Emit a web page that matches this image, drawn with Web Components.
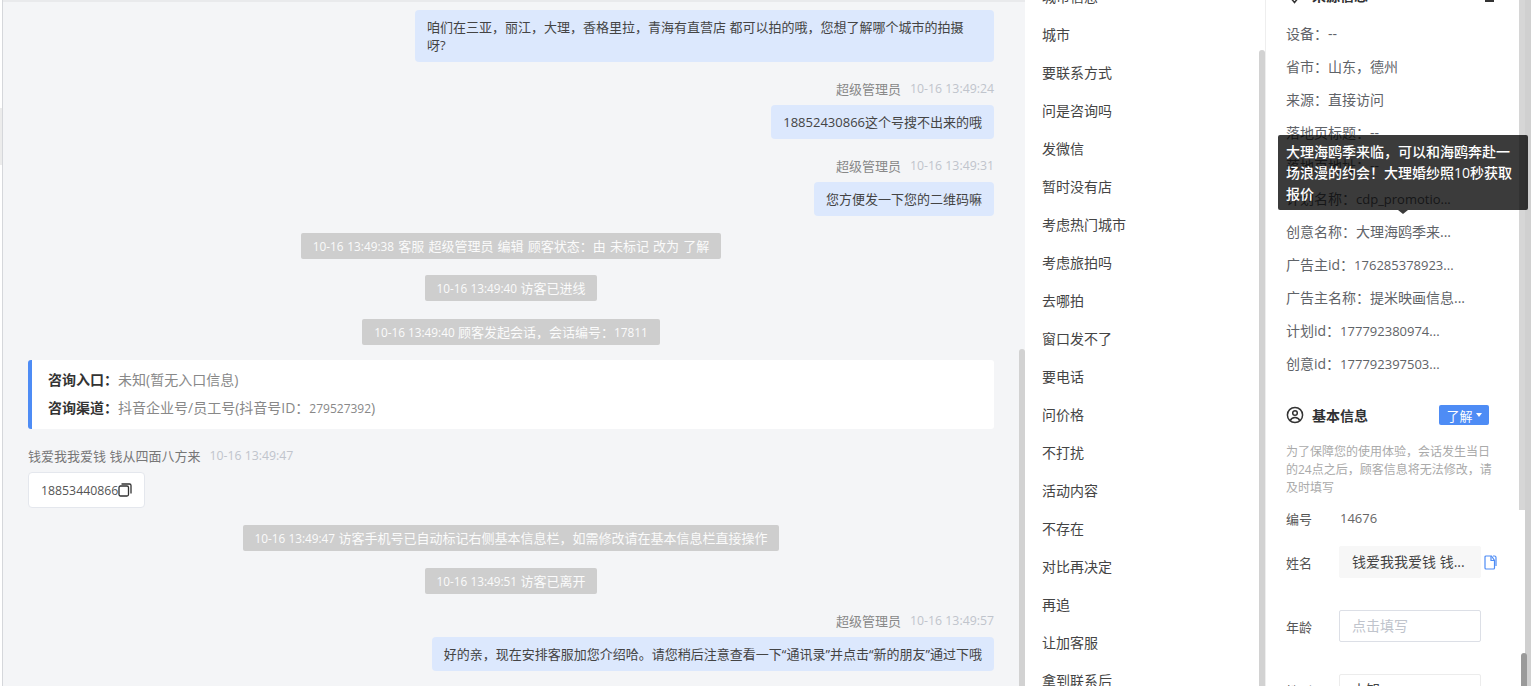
<!DOCTYPE html>
<html lang="zh">
<head>
<meta charset="utf-8">
<title>会话</title>
<style>
  html, body { margin: 0; height: 686px; overflow: hidden; background: #fff; }
  body { font-family: "Open Sans", "Noto Sans CJK SC", sans-serif; font-size: 13px; color: #333; }
</style>
</head>
<body>

<app-shell>
  <chat-panel>
    <chat-bubble side="right" style="margin-top:8px;width:579px">咱们在三亚，丽江，大理，香格里拉，青海有直营店 都可以拍的哦，您想了解哪个城市的拍摄<br>呀?</chat-bubble>
    <chat-meta side="right" name="超级管理员" time="10-16 13:49:24" style="margin-top:18px"></chat-meta>
    <chat-bubble side="right" style="margin-top:7px">18852430866这个号搜不出来的哦</chat-bubble>
    <chat-meta side="right" name="超级管理员" time="10-16 13:49:31" style="margin-top:18px"></chat-meta>
    <chat-bubble side="right" style="margin-top:7px">您方便发一下您的二维码嘛</chat-bubble>
    <sys-chip style="margin-top:17px;word-spacing:.8px"><small>10-16 13:49:38</small> 客服 超级管理员 编辑 顾客状态：由 未标记 改为 了解</sys-chip>
    <sys-chip style="margin-top:16px"><small>10-16 13:49:40</small> 访客已进线</sys-chip>
    <sys-chip style="margin-top:18px"><small>10-16 13:49:40</small> 顾客发起会话，会话编号：<small>17811</small></sys-chip>
    <entry-card style="margin-top:15px">
      <entry-line label="咨询入口：">未知(暂无入口信息)</entry-line>
      <entry-line label="咨询渠道：">抖音企业号/员工号(抖音号ID：<small>279527392</small>)</entry-line>
    </entry-card>
    <chat-meta side="left" name="钱爱我我爱钱 钱从四面八方来" time="10-16 13:49:47" style="margin-top:18px"></chat-meta>
    <phone-bubble style="margin-top:7px">18853440866</phone-bubble>
    <sys-chip style="margin-top:17px"><small>10-16 13:49:47</small> 访客手机号已自动标记右侧基本信息栏，如需修改请在基本信息栏直接操作</sys-chip>
    <sys-chip style="margin-top:17px"><small>10-16 13:49:51</small> 访客已离开</sys-chip>
    <chat-meta side="right" name="超级管理员" time="10-16 13:49:57" style="margin-top:18px"></chat-meta>
    <chat-bubble side="right" style="margin-top:7px">好的亲，现在安排客服加您介绍哈。请您稍后注意查看一下“通讯录”并点击“新的朋友”通过下哦</chat-bubble>
  </chat-panel>

  <phrase-list>
    <span>城市信息</span><span>城市</span><span>要联系方式</span><span>问是咨询吗</span><span>发微信</span>
    <span>暂时没有店</span><span>考虑热门城市</span><span>考虑旅拍吗</span><span>去哪拍</span><span>窗口发不了</span>
    <span>要电话</span><span>问价格</span><span>不打扰</span><span>活动内容</span><span>不存在</span>
    <span>对比再决定</span><span>再追</span><span>让加客服</span><span>拿到联系后</span>
  </phrase-list>

  <info-panel>
    <source-head></source-head>
    <info-row label="设备：">--</info-row>
    <info-row label="省市：">山东，德州</info-row>
    <info-row label="来源：">直接访问</info-row>
    <info-row label="落地页标题：">--</info-row>
    <info-row label="落地页地址：">--</info-row>
    <info-row label="计划名称："><small>cdp_promotio...</small></info-row>
    <info-row label="创意名称：">大理海鸥季来...</info-row>
    <info-row label="广告主id："><small>176285378923...</small></info-row>
    <info-row label="广告主名称：">提米映画信息...</info-row>
    <info-row label="计划id："><small>177792380974...</small></info-row>
    <info-row label="创意id："><small>177792397503...</small></info-row>
    <basic-head></basic-head>
    <hint-text>为了保障您的使用体验，会话发生当日的24点之后，顾客信息将无法修改，请及时填写</hint-text>
    <form-row label="编号" kind="plain" value="14676" style="height:18px;margin-top:12px"></form-row>
    <form-row label="姓名" kind="filled" value="钱爱我我爱钱 钱..." style="margin-top:19px"></form-row>
    <form-row label="年龄" kind="empty" value="点击填写" style="margin-top:32px"></form-row>
    <form-row label="性别" kind="outlined" value="未知" style="margin-top:32px"></form-row>
  </info-panel>

  <hover-tip>大理海鸥季来临，可以和海鸥奔赴一场浪漫的约会！大理婚纱照10秒获取报价</hover-tip>
</app-shell>

<script>
// little helper, every element below is just a template + shadow root
function tpl(html) {
  const t = document.createElement('template');
  t.innerHTML = html;
  return t;
}

class Base extends HTMLElement {
  constructor() {
    super();
    this.attachShadow({ mode: 'open' });
    this.shadowRoot.appendChild(this.constructor.template.content.cloneNode(true));
  }
}

/////////////////      page frame      ///////////////////////

class AppShell extends Base {
  static template = tpl(`
    <style>
      :host { display: flex; position: relative; width: 1531px; height: 686px; overflow: hidden; background: #fff; }
      .edge { flex: none; width: 3px; box-sizing: border-box; background: #fff; border-right: 1px solid #d5d7db; }
      .outer { flex: none; width: 12px; display: flex; background: #fff; }
      .outer i { display: block; width: 6px; background: #fff; }
      .outer i.a { height: 510px; background: #d6d6d6; }
      .outer i.b { background: #d0d0d0; }
      .handle { position: absolute; left: 0; top: 108px; width: 2px; height: 57px; background: #ececec; }
      .dark { position: absolute; left: 1521px; top: 653px; width: 6px; height: 33px; border-radius: 3px 3px 0 0; background: #9a9a9a; }
    </style>
    <div class="edge"></div>
    <slot></slot>
    <div class="outer"><i class="a"></i><i class="b"></i></div>
    <div class="handle"></div>
    <div class="dark"></div>
  `);
}

class ScrollThumb extends Base {
  static template = tpl(`
    <style>
      :host { display: block; position: absolute; right: 0; bottom: 0; width: 6px; background: #d2d2d2; border-radius: 3px 3px 0 0; }
    </style>
  `);
}

/////////////////      chat column      //////////////////////

class ChatPanel extends Base {
  static template = tpl(`
    <style>
      :host { display: block; flex: none; width: 1022px; height: 686px; position: relative; overflow: hidden; background: #f4f5f7; }
      .top { height: 2px; background: #e9eaec; }
      .flow { display: flex; flex-direction: column; box-sizing: border-box; height: 684px; padding: 0 31px 0 25px; }
      scroll-thumb { top: 349px; }
    </style>
    <div class="top"></div>
    <div class="flow"><slot></slot></div>
    <scroll-thumb></scroll-thumb>
  `);
}

class ChatBubble extends Base {
  static template = tpl(`
    <style>
      :host { display: block; align-self: flex-start; box-sizing: border-box; max-width: 579px; padding: 8px 12px; border-radius: 4px;
        background: #dce8fd; color: #444; font-size: 13px; line-height: 18px; }
      :host([side="right"]) { align-self: flex-end; }
    </style>
    <slot></slot>
  `);
}

class ChatMeta extends Base {
  static template = tpl(`
    <style>
      :host { display: flex; gap: 9px; height: 18px; line-height: 18px; font-size: 13px; color: #888; }
      :host([side="right"]) { justify-content: flex-end; }
      :host([side="left"]) { color: #777; }
      .time { color: #c0c4cc; font-size: 12.3px; }
    </style>
    <span class="name"></span><span class="time"></span>
  `);
  connectedCallback() {
    this.shadowRoot.querySelector('.name').textContent = this.getAttribute('name');
    this.shadowRoot.querySelector('.time').textContent = this.getAttribute('time');
  }
}

class SysChip extends Base {
  static template = tpl(`
    <style>
      :host { display: block; align-self: center; height: 26px; line-height: 26px; padding: 0 12px; border-radius: 2px;
        background: #cecece; color: #fbfbfb; font-size: 13px; white-space: nowrap; }
      ::slotted(small) { font-size: 11.8px; }
    </style>
    <slot></slot>
  `);
}

class EntryCard extends Base {
  static template = tpl(`
    <style>
      :host { display: flex; flex-direction: column; gap: 10px; box-sizing: border-box; height: 69px; padding: 11px 16px;
        background: #fff; border-left: 4px solid #4e8cf5; border-radius: 3px; }
    </style>
    <slot></slot>
  `);
}

class EntryLine extends Base {
  static template = tpl(`
    <style>
      :host { display: block; height: 18px; line-height: 18px; font-size: 14px; color: #888; }
      b { color: #333; font-weight: 700; }
      ::slotted(small) { font-size: 12px; }
    </style>
    <b></b><slot></slot>
  `);
  connectedCallback() {
    this.shadowRoot.querySelector('b').textContent = this.getAttribute('label');
  }
}

class PhoneBubble extends Base {
  static template = tpl(`
    <style>
      :host { display: flex; align-items: center; align-self: flex-start; box-sizing: border-box; height: 36px; width: 117px; padding: 0 12px;
        background: #fff; border: 1px solid #e4e7ed; border-radius: 4px; color: #555; font-size: 12.3px; }
      svg { display: block; flex: none; margin-top: -1px; }
    </style>
    <slot></slot>
    <svg width="14" height="14" viewBox="0 0 14 14" fill="none" stroke="#333" stroke-width="1.3">
      <rect x="1" y="3" width="9.500" height="10" rx="1.500"/>
      <path d="M3.500 1h8a1.500 1.500 0 0 1 1.500 1.500v8"/>
    </svg>
  `);
}

/////////////////      quick phrases      ////////////////////

class PhraseList extends Base {
  static template = tpl(`
    <style>
      :host { display: block; flex: none; width: 241px; height: 686px; position: relative; overflow: hidden; background: #fff;
        box-sizing: border-box; border-right: 1px solid #eee; }
      .flow { display: flex; flex-direction: column; margin-top: -22px; padding-left: 17px; }
      ::slotted(span) { display: block; height: 38px; line-height: 38px; font-size: 14px; color: #444; white-space: nowrap; }
      scroll-thumb { top: 50px; }
    </style>
    <div class="flow"><slot></slot></div>
    <scroll-thumb></scroll-thumb>
  `);
}

/////////////////      right info panel      /////////////////

class InfoPanel extends Base {
  static template = tpl(`
    <style>
      :host { display: block; flex: none; width: 253px; height: 686px; overflow: hidden; background: #fff; }
      .flow { display: flex; flex-direction: column; box-sizing: border-box; margin-top: -17px; padding: 0 21px 0 20px; }
    </style>
    <div class="flow"><slot></slot></div>
  `);
}

class SourceHead extends Base {
  static template = tpl(`
    <style>
      :host { display: flex; align-items: center; box-sizing: border-box; height: 34px; padding-bottom: 10px; font-size: 14px; font-weight: 700; color: #303133; }
      svg { flex: none; margin-right: 9px; }
      .folder { margin-left: auto; margin-right: 4px; width: 9px; height: 4px; background: #333; align-self: flex-start; margin-top: 15px; }
    </style>
    <svg width="17" height="17" viewBox="0 0 17 17" fill="none" stroke="#333" stroke-width="1.5">
      <path d="M8.500 15.500 3.500 9.500a6 6 0 0 1-1-3.200 6 6 0 0 1 12 0c0 1.200-.4 2.200-1 3.200z"/>
    </svg>
    <span>来源信息</span>
    <div class="folder"></div>
  `);
}

class InfoRow extends Base {
  static template = tpl(`
    <style>
      :host { display: block; height: 33px; line-height: 33px; font-size: 14px; color: #5f6368; white-space: nowrap; }
      ::slotted(small) { font-size: 13px; }
    </style>
    <span></span><slot></slot>
  `);
  connectedCallback() {
    this.shadowRoot.querySelector('span').textContent = this.getAttribute('label');
  }
}

class BasicHead extends Base {
  static template = tpl(`
    <style>
      :host { display: flex; align-items: center; height: 20px; margin-top: 25px; font-size: 14px; font-weight: 700; color: #303133; }
      svg { flex: none; margin-right: 8px; }
      .btn { display: flex; align-items: center; justify-content: center; gap: 3px; box-sizing: border-box; width: 50px; height: 20px; margin-left: auto; margin-right: 9px;
        background: #4e8cf5; border-radius: 2px; color: #fff; font-size: 13px; font-weight: 400; }
      .caret { width: 0; height: 0; border: 3.500px solid transparent; border-top: 4px solid #fff; border-bottom: 0; }
    </style>
    <svg width="18" height="18" viewBox="0 0 18 18" fill="none" stroke="#333" stroke-width="1.500">
      <circle cx="9" cy="9" r="7.600"/>
      <circle cx="9" cy="7" r="2.300"/>
      <path d="M4.300 14.600c.8-2.200 2.600-3.200 4.700-3.200s3.900 1 4.700 3.200"/>
    </svg>
    <span>基本信息</span>
    <div class="btn">了解<i class="caret"></i></div>
  `);
}

class HintText extends Base {
  static template = tpl(`
    <style>
      :host { display: block; width: 212px; margin-top: 18px; font-size: 12px; line-height: 18px; color: #aaa; }
    </style>
    <slot></slot>
  `);
}

class FormRow extends Base {
  static template = tpl(`
    <style>
      :host { display: flex; align-items: center; height: 32px; font-size: 13px; color: #555; }
      .label { flex: none; width: 53px; }
      .val { box-sizing: border-box; width: 142px; height: 32px; line-height: 30px; padding: 0 12px; border: 1px solid transparent; border-radius: 2px; font-size: 14px; white-space: nowrap; overflow: hidden; }
      :host([kind="plain"]) .val { padding: 0 0 0 1px; height: auto; line-height: 18px; border: 0; color: #666; font-size: 13px; }
      :host([kind="filled"]) .val { background: #f7f7f7; color: #444; border-color: #f7f7f7; }
      :host([kind="empty"]) .val { border-color: #dcdfe6; color: #c0c4cc; }
      :host([kind="outlined"]) .val { border-color: #ececec; color: #444; }
      svg { display: none; flex: none; margin-left: 3px; }
      :host([kind="filled"]) svg { display: block; }
    </style>
    <span class="label"></span><div class="val"></div>
    <svg width="13" height="15" viewBox="0 0 13 15" fill="none" stroke="#4e8cf5" stroke-width="1.200">
      <path d="M1 3.800V13a1 1 0 0 0 1 1h7.500a1 1 0 0 0 1-1V5.500L7.500 1H2a1 1 0 0 0-1 1z"/>
      <path d="M7 1v4.500h3.500"/>
      <path d="M9 1h1.500A1.500 1.500 0 0 1 12 2.500V11"/>
    </svg>
  `);
  connectedCallback() {
    this.shadowRoot.querySelector('.label').textContent = this.getAttribute('label');
    this.shadowRoot.querySelector('.val').textContent = this.getAttribute('value');
  }
}

class HoverTip extends Base {
  static template = tpl(`
    <style>
      :host { display: block; position: absolute; left: 1278px; top: 135px; box-sizing: border-box; width: 250px; height: 75px; padding: 6px 8px;
        background: rgba(0, 0, 0, .77); border-radius: 2px; color: #fff; font-size: 14px; font-weight: 500; line-height: 21px; }
      :host::after { content: ""; position: absolute; left: 120px; top: 100%; border: 5px solid transparent; border-top: 4px solid #3a3a3a; border-bottom: 0; }
    </style>
    <slot></slot>
  `);
}

customElements.define('scroll-thumb', ScrollThumb);
customElements.define('app-shell', AppShell);
customElements.define('chat-panel', ChatPanel);
customElements.define('chat-bubble', ChatBubble);
customElements.define('chat-meta', ChatMeta);
customElements.define('sys-chip', SysChip);
customElements.define('entry-card', EntryCard);
customElements.define('entry-line', EntryLine);
customElements.define('phone-bubble', PhoneBubble);
customElements.define('phrase-list', PhraseList);
customElements.define('info-panel', InfoPanel);
customElements.define('source-head', SourceHead);
customElements.define('info-row', InfoRow);
customElements.define('basic-head', BasicHead);
customElements.define('hint-text', HintText);
customElements.define('form-row', FormRow);
customElements.define('hover-tip', HoverTip);
</script>
</body>
</html>
